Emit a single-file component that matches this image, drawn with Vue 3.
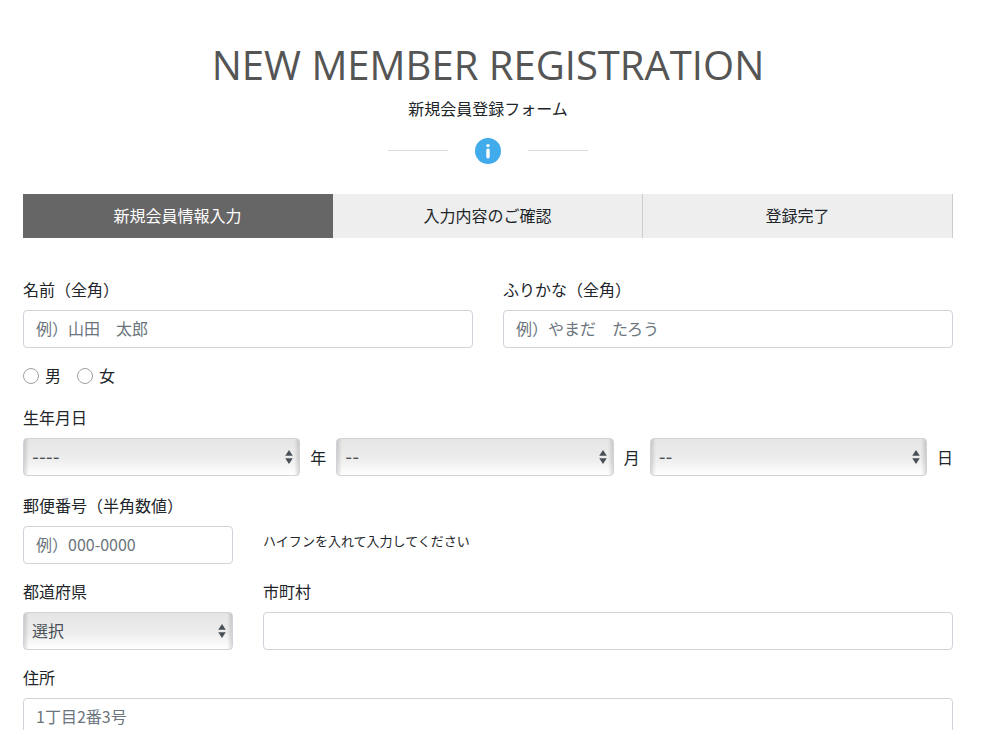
<script setup>
import { reactive } from 'vue'

const steps = ['新規会員情報入力', '入力内容のご確認', '登録完了']
const current = 0

const genders = [
  { id: 'male', label: '男' },
  { id: 'female', label: '女' },
]

const birthParts = [
  { id: 'year', empty: '----', unit: '年' },
  { id: 'month', empty: '--', unit: '月' },
  { id: 'day', empty: '--', unit: '日' },
]

const form = reactive({
  name: '',
  kana: '',
  gender: '',
  year: '',
  month: '',
  day: '',
  zip: '',
  prefecture: '',
  city: '',
  address: '',
})
</script>

<template>
  <main class="page">
    <header class="head">
      <h1 class="title">NEW MEMBER REGISTRATION</h1>
      <p class="subtitle">新規会員登録フォーム</p>
      <div class="divider">
        <span class="rule"></span>
        <svg class="info" viewBox="0 0 26 26" aria-hidden="true">
          <circle cx="13" cy="13" r="13" fill="#41abec" />
          <circle cx="13" cy="7.6" r="1.7" fill="#fff" />
          <rect x="11.3" y="10.4" width="3.4" height="10" rx="1.6" fill="#fff" />
        </svg>
        <span class="rule"></span>
      </div>
    </header>

    <ol class="steps">
      <li v-for="(step, i) in steps" :key="step" class="step" :class="{ active: i === current }">
        {{ step }}
      </li>
    </ol>

    <form class="form" @submit.prevent>
      <div class="row halves">
        <div class="field">
          <label for="name">名前（全角）</label>
          <input id="name" v-model="form.name" class="control" type="text" placeholder="例）山田　太郎" />
        </div>
        <div class="field">
          <label for="kana">ふりかな（全角）</label>
          <input id="kana" v-model="form.kana" class="control" type="text" placeholder="例）やまだ　たろう" />
        </div>
      </div>

      <div class="genders">
        <span v-for="g in genders" :key="g.id" class="gender">
          <input :id="g.id" v-model="form.gender" class="radio" type="radio" name="gender" :value="g.id" />
          <label :for="g.id">{{ g.label }}</label>
        </span>
      </div>

      <div class="field birth">
        <label for="year">生年月日</label>
        <div class="parts">
          <template v-for="p in birthParts" :key="p.id">
            <span class="picker">
              <select :id="p.id" v-model="form[p.id]" class="control select dashes" :aria-label="p.unit">
                <option value="">{{ p.empty }}</option>
              </select>
              <svg class="arrows" viewBox="0 0 8 14" aria-hidden="true">
                <path d="M4 0L7.8 5.8H.2zM4 14L.2 8.2h7.6z" fill="#495057" />
              </svg>
            </span>
            <span>{{ p.unit }}</span>
          </template>
        </div>
      </div>

      <div class="row narrow">
        <div class="field">
          <label for="zip">郵便番号（半角数値）</label>
          <input id="zip" v-model="form.zip" class="control" type="text" placeholder="例）000-0000" />
        </div>
        <p class="hint">ハイフンを入れて入力してください</p>
      </div>

      <div class="row narrow">
        <div class="field">
          <label for="prefecture">都道府県</label>
          <span class="picker">
            <select id="prefecture" v-model="form.prefecture" class="control select">
              <option value="">選択</option>
            </select>
            <svg class="arrows" viewBox="0 0 8 14" aria-hidden="true">
              <path d="M4 0L7.8 5.8H.2zM4 14L.2 8.2h7.6z" fill="#495057" />
            </svg>
          </span>
        </div>
        <div class="field">
          <label for="city">市町村</label>
          <input id="city" v-model="form.city" class="control" type="text" />
        </div>
      </div>

      <div class="field">
        <label for="address">住所</label>
        <input id="address" v-model="form.address" class="control" type="text" placeholder="1丁目2番3号" />
      </div>
    </form>
  </main>
</template>

<style>
html {
  background: #fff;
  overflow-x: hidden;
  scrollbar-width: none;
}
</style>

<style scoped>
* {
  box-sizing: border-box;
}
.page {
  padding: 35px 47px 16px 23px;
  color: #212529;
  font-family: "Noto Sans CJK JP", sans-serif;
  font-size: 16px;
  line-height: 24px;
}
.head {
  text-align: center;
}
.title {
  margin: 0 0 1px;
  color: #555;
  font-family: "Open Sans", sans-serif;
  font-size: 40px;
  font-weight: 400;
  line-height: 60px;
}
.subtitle {
  margin: 0;
}
.divider {
  display: flex;
  align-items: center;
  justify-content: center;
  gap: 27px;
  margin-top: 18px;
}
.rule {
  width: 60px;
  height: 2px;
  border-top: 1px solid #ddd;
}
.info {
  width: 26px;
  height: 26px;
}
.steps {
  display: grid;
  grid-template-columns: repeat(3, 1fr);
  margin: 30px 0 40px;
  padding: 0;
  list-style: none;
}
.step {
  padding: 9px 0 11px;
  border-right: 1px solid #ccc;
  background: #eee;
  text-align: center;
}
.step.active {
  border-color: #666;
  background: #666;
  color: #fff;
}
.form {
  display: flex;
  flex-direction: column;
  gap: 16px;
}
.row {
  display: grid;
  column-gap: 30px;
}
.halves {
  grid-template-columns: 1fr 1fr;
}
.narrow {
  grid-template-columns: 210px 1fr;
}
.field {
  display: flex;
  flex-direction: column;
  gap: 10px;
  min-width: 0;
}
.field > label {
  line-height: 22px;
}
.control {
  width: 100%;
  height: 38px;
  padding: 5px 12px 7px;
  border: 1px solid #ced4da;
  border-radius: 4px;
  background: #fff;
  color: #495057;
  font: inherit;
}
.control::placeholder {
  color: #6c757d;
  opacity: 1;
}
.genders {
  display: flex;
  gap: 16px;
}
.gender {
  display: flex;
  align-items: center;
  gap: 6px;
  height: 24px;
}
.gender label {
  line-height: 22px;
  padding-bottom: 2px;
}
.radio {
  width: 16px;
  height: 16px;
  margin: 0;
  border: 1px solid #a0a0a0;
  border-radius: 50%;
  background: #fff;
  appearance: none;
}
.radio:checked {
  border: 5px solid #41abec;
}
.birth {
  margin: 2px 0;
}
.parts {
  display: flex;
  align-items: center;
  gap: 10px;
}
.picker {
  position: relative;
  display: block;
  flex: 1;
}
.select {
  display: block;
  padding: 5px 24px 7px 8px;
  background:
    linear-gradient(to right, #0002, #0000 5px, #0000 calc(100% - 5px), #0002),
    linear-gradient(#e5e5e5, #ededed 55%, #fff);
  appearance: none;
}
.dashes {
  padding-top: 7px;
  padding-bottom: 5px;
  font-family: Inter, "Noto Sans CJK JP", sans-serif;
  font-size: 15px;
  font-weight: 500;
}
.arrows {
  position: absolute;
  top: 12px;
  right: 7px;
  width: 8px;
  height: 14px;
  pointer-events: none;
}
.hint {
  align-self: end;
  margin: 0;
  padding-bottom: 11px;
  font-size: 13px;
}
</style>
